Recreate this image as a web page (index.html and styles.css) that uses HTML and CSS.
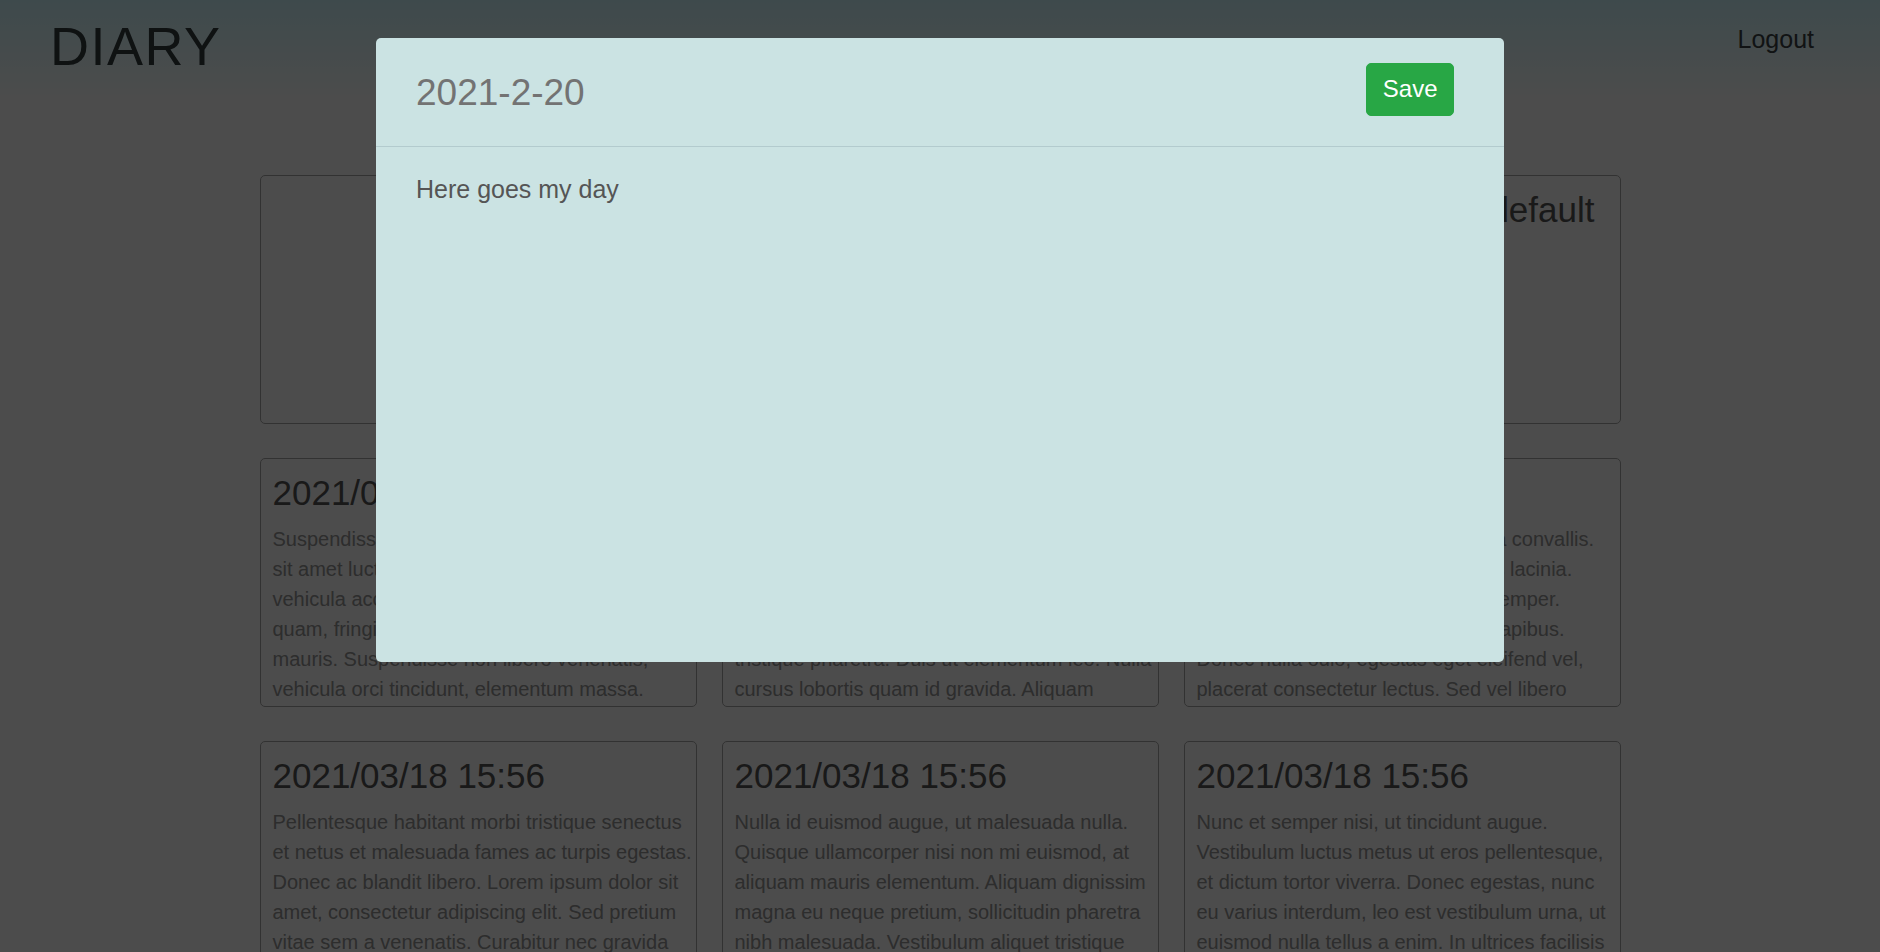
FILE: index.html
```html
<!DOCTYPE html>
<html lang="en">
<head>
<meta charset="utf-8">
<title>Diary</title>
<link rel="stylesheet" href="styles.css">
</head>
<body>
<header class="topbar">
  <div class="brand">DIARY</div>
  <a class="logout" href="#">Logout</a>
</header>

<main class="grid">
  <section class="card card-wide">
    <h2 class="card-title">Pick a date to write, today is default</h2>
  </section>

  <article class="card">
    <h2 class="card-title">2021/03/18 15:56</h2>
    <p class="card-text">Suspendisse potenti. Maecenas convallis urna sit amet luctus tortor. Nunc vel felis eget nunc vehicula accumsan. Integer sed elit at eros quam, fringilla id tempor lorem sed dictum. mauris. Suspendisse non libero venenatis, vehicula orci tincidunt, elementum massa. Curabitur vitae lorem at magna pulvinar tempor.</p>
  </article>
  <article class="card">
    <h2 class="card-title">2021/03/18 15:56</h2>
    <p class="card-text">Aenean at lorem vitae ligula egestas rhoncus. Fusce quis mi non nisi posuere tempus vel sed arcu. Etiam sodales, nisl eget varius semper, lacus nisl dictum massa, quis ultrices nunc tristique pharetra. Duis ut elementum leo. Nulla cursus lobortis quam id gravida. Aliquam consectetur, lorem sit amet lacinia feugiat.</p>
  </article>
  <article class="card">
    <h2 class="card-title">2021/03/18 15:56</h2>
    <p class="card-text">Vivamus sit amet nec dui tempus a convallis. Nam quis justo sed vel nibh finibus lacinia. Curabitur eu nibh sit amet lectus semper. Aenean tincidunt risus quis mi id dapibus. Donec nulla odio, egestas eget eleifend vel, placerat consectetur lectus. Sed vel libero tristique, vestibulum nulla vitae, aliquet neque.</p>
  </article>

  <article class="card">
    <h2 class="card-title">2021/03/18 15:56</h2>
    <p class="card-text">Pellentesque habitant morbi tristique senectus et netus et malesuada fames ac turpis egestas. Donec ac blandit libero. Lorem ipsum dolor sit amet, consectetur adipiscing elit. Sed pretium vitae sem a venenatis. Curabitur nec gravida lorem, sed porta nisl.</p>
  </article>
  <article class="card">
    <h2 class="card-title">2021/03/18 15:56</h2>
    <p class="card-text">Nulla id euismod augue, ut malesuada nulla. Quisque ullamcorper nisi non mi euismod, at aliquam mauris elementum. Aliquam dignissim magna eu neque pretium, sollicitudin pharetra nibh malesuada. Vestibulum aliquet tristique lectus, eu dictum nunc.</p>
  </article>
  <article class="card">
    <h2 class="card-title">2021/03/18 15:56</h2>
    <p class="card-text">Nunc et semper nisi, ut tincidunt augue. Vestibulum luctus metus ut eros pellentesque, et dictum tortor viverra. Donec egestas, nunc eu varius interdum, leo est vestibulum urna, ut euismod nulla tellus a enim. In ultrices facilisis nisl.</p>
  </article>
</main>

<div class="backdrop"></div>
<div class="modal">
  <div class="modal-content">
    <div class="modal-header">
      <h1 class="modal-title">2021-2-20</h1>
      <button class="btn-save" type="button">Save</button>
    </div>
    <div class="modal-body">Here goes my day</div>
  </div>
</div>
</body>
</html>
```

FILE: styles.css
```css
html, body {
  margin: 0;
  height: 100%;
}

body {
  font-family: "Liberation Sans", Arial, sans-serif;
  background: #ffffff;
  overflow: hidden;
}

.topbar {
  box-sizing: border-box;
  height: 100px;
  padding: 14px 66px 0 50px;
  display: flex;
  justify-content: space-between;
  align-items: flex-start;
  background: linear-gradient(to bottom, #d0f8ff 0%, #ffffff 100%);
}

.brand {
  font-size: 54px;
  line-height: 65px;
  letter-spacing: 1.5px;
  color: #323c3f;
}

.logout {
  margin-top: 7px;
  font-size: 25px;
  line-height: 37px;
  color: #3a4244;
  text-decoration: none;
}

.grid {
  display: grid;
  grid-template-columns: repeat(3, 437px);
  justify-content: center;
  gap: 34px 25px;
  padding-top: 75px;
}

.card {
  box-sizing: border-box;
  height: 249px;
  border: 1px solid #a8a8a8;
  border-radius: 5px;
  padding: 12px 2px 0 12px;
  overflow: hidden;
}

.card-wide {
  grid-column: 1 / -1;
  text-align: right;
  padding-right: 25px;
}

.card-title {
  margin: 0 0 9px;
  font-size: 35px;
  line-height: 44px;
  font-weight: normal;
  color: #545454;
}

.card-text {
  margin: 0;
  font-size: 20px;
  line-height: 30px;
  color: #969696;
}

.backdrop {
  position: fixed;
  inset: 0;
  background: rgba(0, 0, 0, 0.7);
}

.modal {
  position: fixed;
  inset: 0;
  display: flex;
  justify-content: center;
  align-items: flex-start;
  padding-top: 38px;
}

.modal-content {
  width: 1128px;
  height: 624px;
  background: #cbe3e3;
  border-radius: 5px;
  display: flex;
  flex-direction: column;
}

.modal-header {
  box-sizing: border-box;
  height: 109px;
  padding: 25px 50px 0 40px;
  border-bottom: 1px solid #b3cbce;
  display: flex;
  justify-content: space-between;
  align-items: flex-start;
}

.modal-title {
  margin: 0;
  font-size: 37px;
  line-height: 60px;
  font-weight: normal;
  color: #737373;
}

.btn-save {
  font-family: "Liberation Sans", Arial, sans-serif;
  font-size: 24px;
  line-height: 36px;
  padding: 7px 15.5px 8px;
  border: 1px solid #28a745;
  border-radius: 5px;
  background: #28a745;
  color: #ffffff;
  cursor: pointer;
}

.modal-body {
  flex: 1;
  padding: 24px 40px;
  font-size: 25px;
  line-height: 37.5px;
  color: #555555;
}
```
